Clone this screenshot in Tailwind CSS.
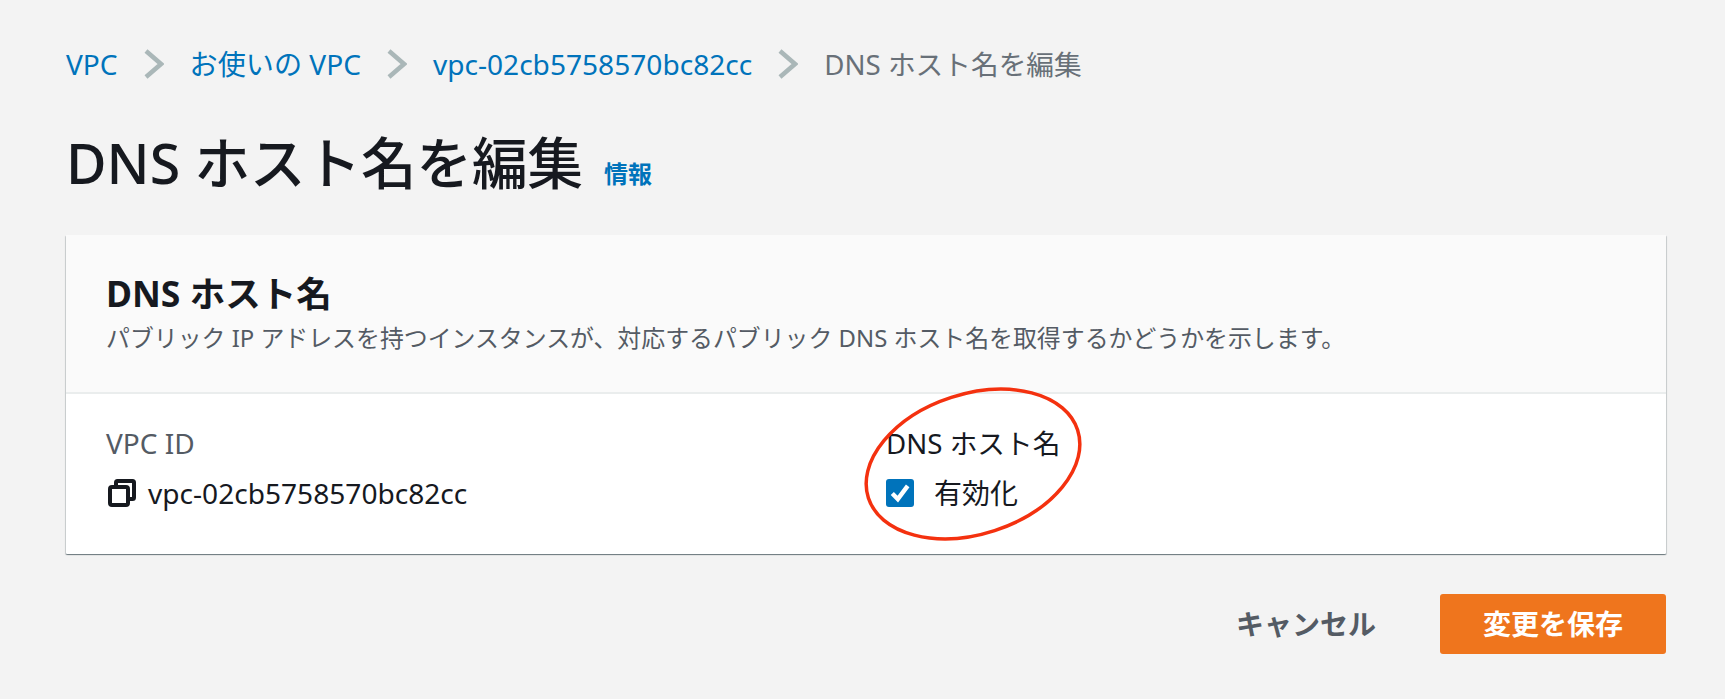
<!DOCTYPE html>
<html lang="ja">
<head>
<meta charset="utf-8">
<script src="https://cdn.jsdelivr.net/npm/@tailwindcss/browser@4"></script>
</head>
<body class="m-0 h-[699px] w-[1725px] overflow-hidden bg-[#f3f3f3] font-['Noto_Sans','Noto_Sans_CJK_JP',sans-serif] text-[#16191f]">
<main class="relative h-full w-full pl-[66px] pr-[59px] pt-[44px]">
  <nav class="flex h-[40px] items-center text-[28.1px] leading-[40px] text-[#0073bb]">
    <a>VPC</a>
    <svg class="ml-[26px] mr-[26px] h-[30px] w-[20px]" viewBox="0 0 20 30" fill="none" stroke="#aab7b8" stroke-width="4.500"><path d="M2 2l15 13L2 28"/></svg>
    <a>お使いの VPC</a>
    <svg class="ml-[26px] mr-[26px] h-[30px] w-[20px]" viewBox="0 0 20 30" fill="none" stroke="#aab7b8" stroke-width="4.500"><path d="M2 2l15 13L2 28"/></svg>
    <a>vpc-02cb5758570bc82cc</a>
    <svg class="ml-[26px] mr-[26px] h-[30px] w-[20px]" viewBox="0 0 20 30" fill="none" stroke="#aab7b8" stroke-width="4.500"><path d="M2 2l15 13L2 28"/></svg>
    <span class="text-[27.7px] text-[#687078]">DNS ホスト名を編集</span>
  </nav>
  <header class="mt-[43px] flex h-[72px] items-center">
    <h1 class="text-[55.5px] font-medium leading-[72px]">DNS ホスト名を編集</h1>
    <a class="ml-[21px] mt-[22px] text-[24px] font-bold text-[#0073bb]">情報</a>
  </header>
  <section class="mt-[36px] h-[319px] rounded-[1px] bg-white shadow-[0_1px_1px_0_rgba(0,28,36,0.4),1px_1px_1px_0_rgba(0,28,36,0.15),-1px_1px_1px_0_rgba(0,28,36,0.15)]">
    <div class="h-[159px] border-b-2 border-[#eaeded] bg-[#fafafa] pl-[40px] pt-[34px]">
      <h2 class="text-[35.5px] font-bold leading-[48px]">DNS ホスト名</h2>
      <p class="mt-[3px] text-[23.9px] leading-[36px] text-[#545b64]">パブリック IP アドレスを持つインスタンスが、対応するパブリック DNS ホスト名を取得するかどうかを示します。</p>
    </div>
    <div class="grid grid-cols-[780px_1fr] pl-[40px] pt-[29px]">
      <div>
        <div class="text-[28px] leading-[40px] text-[#545b64]">VPC ID</div>
        <div class="mt-[10px] flex h-[40px] items-center">
          <svg class="ml-[2px] mr-[12px] h-[28px] w-[28px]" viewBox="0 0 28 28" fill="none" stroke="#16191f" stroke-width="4"><rect x="2" y="8" width="18" height="18" rx="2"/><path d="M8 7V3.5C8 2.5 8.5 2 9.5 2h15c1 0 1.500.5 1.500 1.500v15c0 1-.5 1.500-1.500 1.500H21"/></svg>
          <span class="text-[28.1px] leading-[40px]">vpc-02cb5758570bc82cc</span>
        </div>
      </div>
      <div>
        <div class="text-[27.7px] leading-[40px]">DNS ホスト名</div>
        <label class="mt-[10px] flex h-[40px] items-center">
          <span class="flex h-[28px] w-[28px] items-center justify-center rounded-[3px] bg-[#0073bb]">
            <svg class="h-[22px] w-[22px]" viewBox="0 0 20 20" fill="none" stroke="#fff" stroke-width="4"><path d="M3 10.500l5 5L17 3.500"/></svg>
          </span>
          <span class="ml-[20px] text-[28px] leading-[40px] text-[#16191f]">有効化</span>
        </label>
      </div>
    </div>
  </section>
  <footer class="mt-[40px] flex items-center justify-end">
    <button class="text-[28px] font-bold leading-[40px] text-[#545b64]">キャンセル</button>
    <button class="ml-[64px] h-[60px] w-[226px] rounded-[3px] bg-[#ef751d] text-[28px] font-bold leading-[40px] text-white">変更を保存</button>
  </footer>
  <svg class="absolute left-[857px] top-[380px] h-[165px] w-[235px]" viewBox="0 0 235 165" fill="none" stroke="#f4310f" stroke-width="3.500"><ellipse cx="116" cy="84" rx="110" ry="70" transform="rotate(-18 116 84)"/></svg>
</main>
</body>
</html>
